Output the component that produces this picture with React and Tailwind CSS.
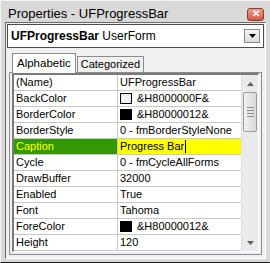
import React from "react";

const rows = [
  { name: "(Name)", value: "UFProgressBar" },
  { name: "BackColor", value: "&H8000000F&", swatch: "#f0f0f0" },
  { name: "BorderColor", value: "&H80000012&", swatch: "#000000" },
  { name: "BorderStyle", value: "0 - fmBorderStyleNone" },
  { name: "Caption", value: "Progress Bar", selected: true },
  { name: "Cycle", value: "0 - fmCycleAllForms" },
  { name: "DrawBuffer", value: "32000" },
  { name: "Enabled", value: "True" },
  { name: "Font", value: "Tahoma" },
  { name: "ForeColor", value: "&H80000012&", swatch: "#000000" },
  { name: "Height", value: "120" },
];

function Row({ r }) {
  return (
    <div className="flex h-[16px] shrink-0 border-b border-[#c8c8c8]">
      <div
        className={
          "w-[104px] shrink-0 border-r border-[#c8c8c8] pl-[2px] leading-[15px] " +
          (r.selected ? "bg-[#339900] text-[#ffff00]" : "text-black")
        }
      >
        {r.name}
      </div>
      <div
        className={
          "flex-1 flex items-center pl-[2px] leading-[15px] whitespace-nowrap overflow-hidden " +
          (r.selected ? "bg-[#ffff00]" : "")
        }
      >
        {r.swatch && (
          <span
            className="w-[12px] h-[11px] border border-black mr-[5px] shrink-0"
            style={{ background: r.swatch }}
          />
        )}
        <span>{r.value}</span>
        {r.selected && <span className="w-[1px] h-[13px] bg-black ml-[1px]" />}
      </div>
    </div>
  );
}

export default function App() {
  return (
    <div
      className="w-[270px] h-[263px] bg-[#d9d9d9] flex flex-col overflow-hidden border-l border-t border-[#f4f4f4] border-b border-b-[#1a1a1a]"
      style={{ fontFamily: '"Liberation Sans", Arial, sans-serif' }}
    >
      {/* title bar */}
      <div className="h-[21px] shrink-0 flex items-center justify-between pl-[7px] pr-[6px]">
        <span className="text-[13px] text-black leading-none mt-[3px]">
          Properties - UFProgressBar
        </span>
        <div className="w-[17px] h-[13px] mt-[5px] rounded-[3px] border border-[#8e3a2e] bg-gradient-to-b from-[#eba08d] to-[#cf5a45] flex items-center justify-center">
          <span className="text-white text-[10px] font-bold leading-none">✕</span>
        </div>
      </div>
      {/* client */}
      <div className="flex-1 ml-[4px] mr-[4px] mb-[5px] border-l border-t border-[#6a6a6a] border-r border-b border-r-[#ffffff] border-b-[#ffffff] bg-[#f0f0f0] flex flex-col">
        {/* combo */}
        <div className="mx-[1px] mt-[1px] h-[24px] shrink-0 border border-[#4c4c4c] bg-white flex items-center pl-[3px] pr-[3px]">
          <div className="flex-1 text-[12px] text-black whitespace-nowrap leading-none">
            <span className="font-bold">UFProgressBar</span> UserForm
          </div>
          <div className="w-[16px] h-[14px] border border-[#8a8a8a] bg-gradient-to-b from-[#f6f6f6] to-[#dcdcdc] flex items-center justify-center">
            <svg width="7" height="4" viewBox="0 0 7 4">
              <path d="M0 0h7L3.5 4z" fill="#000" />
            </svg>
          </div>
        </div>
        {/* tabs */}
        <div className="flex items-end h-[20px] mt-[4px] pl-[6px] shrink-0">
          <div className="h-[20px] px-[4px] border border-b-0 border-[#898c95] bg-white text-[11.5px] leading-[18px] text-black relative top-[1px] z-10">
            Alphabetic
          </div>
          <div className="h-[16px] px-[3px] ml-[1px] border border-b-0 border-[#898c95] bg-[#f0f0f0] text-[11px] leading-[15px] text-black">
            Categorized
          </div>
        </div>
        {/* tab panel */}
        <div className="flex-1 mx-[3px] mb-[3px] border border-[#898c95] bg-[#f0f0f0] px-[2px] pb-[2px] flex">
          <div className="flex-1 border-l-2 border-t-2 border-[#7a7a7a] border-r border-b border-r-white border-b-white flex overflow-hidden">
            <div className="flex-1 bg-white flex flex-col text-[11px] overflow-hidden">
              {rows.map((r) => (
                <Row key={r.name} r={r} />
              ))}
            </div>
            {/* scrollbar */}
            <div className="w-[17px] shrink-0 bg-[#eaeaea] flex flex-col border-l border-[#e0e0e0]">
              <div className="h-[17px] flex items-center justify-center">
                <svg width="7" height="4" viewBox="0 0 7 4">
                  <path d="M3.5 0L7 4H0z" fill="#606060" />
                </svg>
              </div>
              <div className="mx-[1px] h-[40px] rounded-[2px] border border-[#9a9a9a] bg-gradient-to-r from-[#f2f2f2] to-[#d8d8d8] flex flex-col items-center justify-center gap-[2px]">
                <div className="w-[7px] h-[1px] bg-[#8a8a8a]" />
                <div className="w-[7px] h-[1px] bg-[#8a8a8a]" />
                <div className="w-[7px] h-[1px] bg-[#8a8a8a]" />
                <div className="w-[7px] h-[1px] bg-[#8a8a8a]" />
              </div>
              <div className="flex-1" />
              <div className="h-[17px] flex items-center justify-center">
                <svg width="7" height="4" viewBox="0 0 7 4">
                  <path d="M0 0h7L3.5 4z" fill="#606060" />
                </svg>
              </div>
            </div>
          </div>
        </div>
      </div>
    </div>
  );
}
